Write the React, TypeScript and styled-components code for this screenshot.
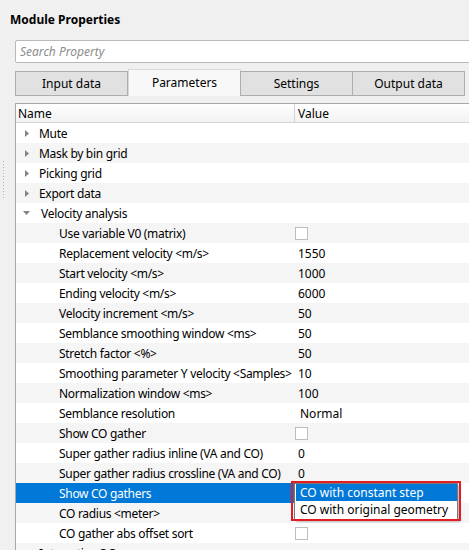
import React from "react";
import styled, { createGlobalStyle } from "styled-components";

const GlobalStyle = createGlobalStyle`
  html, body {
    margin: 0;
    padding: 0;
    background: #f0f0f0;
    overflow: hidden;
  }
  body {
    font-family: "Noto Sans", "Open Sans", sans-serif;
    font-size: 12px;
    color: #000;
  }
`;

type Row = {
  name: string;
  value?: string;
  kind?: "group" | "open" | "check" | "combo";
  selected?: boolean;
};

const rows: Row[] = [
  { name: "Mute", kind: "group" },
  { name: "Mask by bin grid", kind: "group" },
  { name: "Picking grid", kind: "group" },
  { name: "Export data", kind: "group" },
  { name: "Velocity analysis", kind: "open" },
  { name: "Use variable V0 (matrix)", kind: "check" },
  { name: "Replacement velocity <m/s>", value: "1550" },
  { name: "Start velocity <m/s>", value: "1000" },
  { name: "Ending velocity <m/s>", value: "6000" },
  { name: "Velocity increment <m/s>", value: "50" },
  { name: "Semblance smoothing window <ms>", value: "50" },
  { name: "Stretch factor <%>", value: "50" },
  { name: "Smoothing parameter Y velocity <Samples>", value: "10" },
  { name: "Normalization window <ms>", value: "100" },
  { name: "Semblance resolution", value: "Normal", kind: "combo" },
  { name: "Show CO gather", kind: "check" },
  { name: "Super gather radius inline (VA and CO)", value: "0" },
  { name: "Super gather radius crossline (VA and CO)", value: "0" },
  { name: "Show CO gathers", selected: true },
  { name: "CO radius <meter>", value: "" },
  { name: "CO gather abs offset sort", kind: "check" },
  { name: "Interactive QC", kind: "group" },
];

export default function App() {
  return (
    <>
      <GlobalStyle />
      <Page>
        <TopGrip />
        <Title>Module Properties</Title>
        <Body>
          <Splitter>
            <SplitterDots />
          </Splitter>
          <Content>
            <SearchBox placeholder="Search Property" />
            <TabBar>
              <Tab>Input data</Tab>
              <Tab $active>Parameters</Tab>
              <Tab>Settings</Tab>
              <Tab>Output data</Tab>
            </TabBar>
            <Tree>
              <Header>
                <HeaderCell>Name</HeaderCell>
                <HeaderCell $value>Value</HeaderCell>
              </Header>
              {rows.map((r, i) => (
                <TreeRow key={r.name} $alt={i % 2 === 1} $selected={!!r.selected}>
                  <NameCell $child={r.kind !== "group" && r.kind !== "open"}>
                    {r.kind === "group" && (
                      <Arrow viewBox="0 0 4 7">
                        <path d="M0 0 L4 3.5 L0 7 Z" fill="#858585" />
                      </Arrow>
                    )}
                    {r.kind === "open" && (
                      <Arrow $open viewBox="0 0 7 4">
                        <path d="M0 0 L7 0 L3.5 4 Z" fill="#858585" />
                      </Arrow>
                    )}
                    {r.name}
                  </NameCell>
                  <ValueCell $combo={r.kind === "combo"}>
                    {r.kind === "check" && <CheckBox />}
                    {r.value}
                    {r.selected && (
                      <>
                        <Popup>
                          <PopupItem $active>CO with constant step</PopupItem>
                          <PopupItem>CO with original geometry</PopupItem>
                        </Popup>
                        <Highlight />
                      </>
                    )}
                  </ValueCell>
                </TreeRow>
              ))}
            </Tree>
          </Content>
        </Body>
      </Page>
    </>
  );
}

const Page = styled.div`
  display: flex;
  flex-direction: column;
  width: 469px;
  height: 550px;
  overflow: hidden;
`;

const TopGrip = styled.div`
  height: 1px;
  width: 17px;
  margin: 1px 0 0 290px;
  background-image: radial-gradient(circle, #b5b5b5 0.6px, transparent 0.7px);
  background-size: 3px 1px;
`;

const Title = styled.div`
  font-weight: bold;
  padding: 11px 0 0 10px;
  height: 29px;
  box-sizing: border-box;
  line-height: 16px;
`;

const Body = styled.div`
  display: flex;
  flex: 1;
  margin-top: 12px;
`;

const Splitter = styled.div`
  width: 15px;
  flex: none;
  display: flex;
  flex-direction: column;
  align-items: flex-start;
  padding: 121px 0 0 3px;
  box-sizing: border-box;
`;

const SplitterDots = styled.div`
  width: 1px;
  height: 38px;
  background-image: linear-gradient(#b5b5b5 1px, transparent 1px);
  background-size: 1px 3px;
`;

const Content = styled.div`
  display: flex;
  flex-direction: column;
  width: 480px;
  flex: none;
`;

const SearchBox = styled.input`
  height: 23px;
  box-sizing: border-box;
  border: 1px solid #b9b9b9;
  border-radius: 2px 0 0 2px;
  background: #fff;
  padding: 0 4px;
  font-family: "Noto Sans", sans-serif;
  font-size: 12px;
  outline: none;
  &::placeholder {
    color: #8c8c8c;
    font-style: italic;
  }
`;

const TabBar = styled.div`
  display: flex;
  align-items: flex-end;
  height: 27px;
  margin-top: 6px;
`;

const Tab = styled.div<{ $active?: boolean }>`
  width: 113px;
  height: ${(p) => (p.$active ? "27px" : "25px")};
  box-sizing: border-box;
  display: flex;
  align-items: center;
  justify-content: center;
  padding-bottom: ${(p) => (p.$active ? "2px" : "0")};
  border: 1px solid ${(p) => (p.$active ? "#d9d9d9" : "#adadad")};
  border-bottom: ${(p) => (p.$active ? "none" : "1px solid #adadad")};
  margin-left: ${(p) => (p.$active ? "0" : "-1px")};
  background: ${(p) => (p.$active ? "#f8f8f8" : "#e1e1e1")};
  &:first-child {
    margin-left: 0;
  }
`;

const Tree = styled.div`
  margin-top: 7px;
  border: 1px solid #a8a8a8;
  border-right: none;
  background: #fff;
  display: flex;
  flex-direction: column;
`;

const Header = styled.div`
  display: grid;
  grid-template-columns: 278px 1fr;
  height: 19px;
  box-sizing: border-box;
  border-bottom: 1px solid #d5d5d5;
  background: linear-gradient(#ffffff, #f2f2f2);
`;

const HeaderCell = styled.div<{ $value?: boolean }>`
  display: flex;
  align-items: center;
  padding-left: ${(p) => (p.$value ? "3px" : "2px")};
  border-left: ${(p) => (p.$value ? "1px solid #d5d5d5" : "none")};
`;

const TreeRow = styled.div<{ $alt: boolean; $selected: boolean }>`
  display: grid;
  grid-template-columns: 278px 1fr;
  height: 20px;
  background: ${(p) => (p.$alt ? "#f5f5f5" : "#ffffff")};
  color: ${(p) => (p.$selected ? "#fff" : "#000")};
  & > div:first-child {
    background: ${(p) => (p.$selected ? "#0078d7" : "transparent")};
  }
`;

const NameCell = styled.div<{ $child: boolean }>`
  display: flex;
  align-items: center;
  padding-left: ${(p) => (p.$child ? "43px" : "9px")};
  letter-spacing: -0.3px;
  white-space: nowrap;
  overflow: hidden;
`;

const Arrow = styled.svg<{ $open?: boolean }>`
  width: ${(p) => (p.$open ? "7px" : "4px")};
  height: ${(p) => (p.$open ? "4px" : "7px")};
  margin-left: ${(p) => (p.$open ? "-2px" : "0")};
  margin-right: ${(p) => (p.$open ? "11px" : "10px")};
  flex: none;
`;

const ValueCell = styled.div<{ $combo: boolean }>`
  position: relative;
  display: flex;
  align-items: center;
  padding-left: ${(p) => (p.$combo ? "6px" : "4px")};
  color: #000;
  white-space: nowrap;
`;

const CheckBox = styled.span`
  width: 13px;
  height: 13px;
  box-sizing: border-box;
  border: 1px solid #bdbdbd;
  background: #fff;
  margin-left: -3px;
`;

const Popup = styled.div`
  position: absolute;
  left: 0;
  top: 0;
  width: 164px;
  box-sizing: border-box;
  border: 1px solid #7a7a7a;
  background: #fff;
  box-shadow: 2px 2px 2px rgba(0, 0, 0, 0.25);
  padding: 0 0 1px 0;
  z-index: 2;
`;

const PopupItem = styled.div<{ $active?: boolean }>`
  height: 17px;
  display: flex;
  align-items: center;
  padding-left: 4px;
  margin-left: 1px;
  background: ${(p) => (p.$active ? "#0078d7" : "#fff")};
  color: ${(p) => (p.$active ? "#fff" : "#000")};
`;

const Highlight = styled.div`
  position: absolute;
  left: -3px;
  top: -2px;
  width: 170px;
  height: 40px;
  box-sizing: border-box;
  border: 2px solid #e31b23;
  z-index: 3;
`;
